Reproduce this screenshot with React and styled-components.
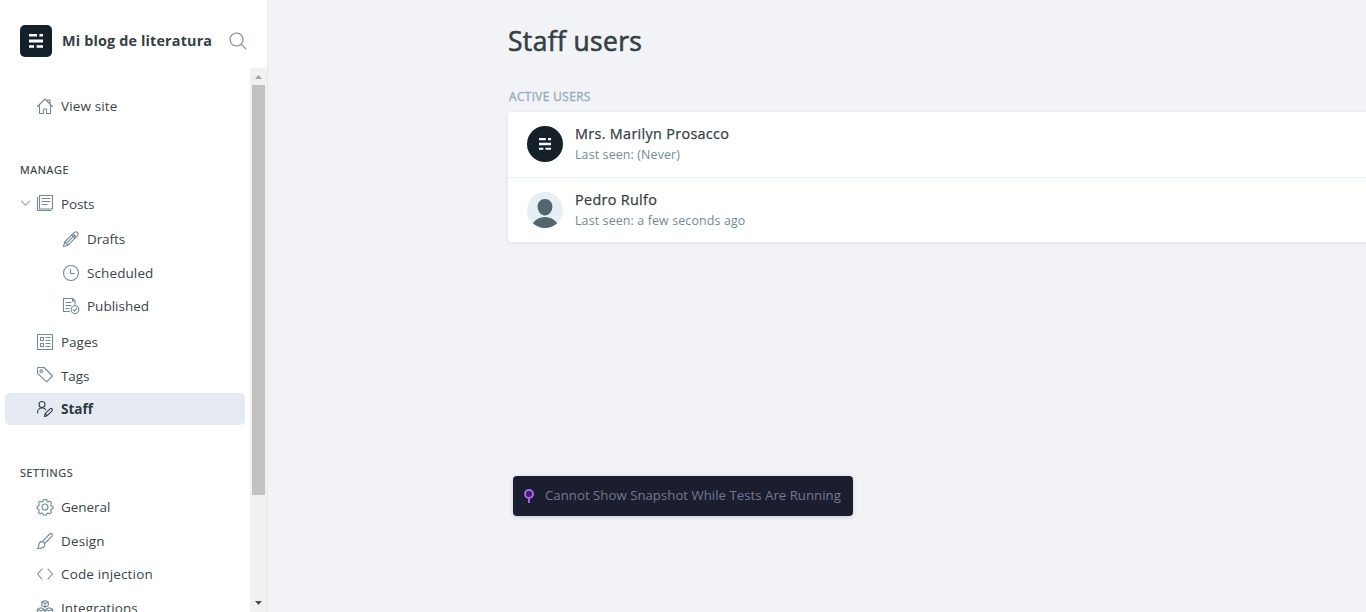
import React from 'react';
import styled, { createGlobalStyle } from 'styled-components';

const GlobalStyle = createGlobalStyle`
  * { box-sizing: border-box; }
  html, body { margin: 0; height: 100%; overflow: hidden; }
  body { font-family: "Open Sans", "Noto Sans", sans-serif; color: #343f44; background: #f2f3f7; }
  h1, h2, h3, p { margin: 0; }
`;

const Shell = styled.div`
  display: flex;
  width: 100%;
  height: 612px;
  overflow: hidden;
  position: relative;
`;

const Sidebar = styled.nav`
  flex: none;
  width: 268px;
  display: flex;
  flex-direction: column;
  background: #fff;
  border-right: 1px solid #e7e9ef;
`;

const SiteHeader = styled.header`
  flex: none;
  height: 68px;
  padding: 25px 20px 11px;
  display: flex;
  align-items: center;
`;

const SiteLogo = styled.span`
  width: 32px;
  height: 32px;
  border-radius: 5px;
  background: #15212a;
  display: flex;
  align-items: center;
  justify-content: center;
`;

const SiteTitle = styled.span`
  margin-left: 10px;
  width: 158px;
  font-size: 14.4px;
  font-weight: 700;
  line-height: 20px;
  letter-spacing: 0.15px;
  white-space: nowrap;
`;

const SearchIcon = styled.svg`
  flex: none;
  width: 18px;
  height: 18px;
  margin-left: 9px;
`;

const ScrollArea = styled.div`
  flex: 1;
  min-height: 0;
  display: flex;
`;

const NavContent = styled.div`
  width: 250px;
  padding: 22px 5px 0;
  overflow: hidden;
`;

const Scrollbar = styled.div`
  width: 17px;
  background: #f1f1f1;
  display: flex;
  flex-direction: column;
  align-items: center;
`;

const ScrollArrow = styled.svg`
  flex: none;
  width: 17px;
  height: 17px;
`;

const ScrollThumb = styled.div`
  width: 13px;
  height: 410px;
  margin-bottom: auto;
  background: #c1c1c1;
`;

const SectionTitle = styled.h3`
  height: 16px;
  margin: ${(p) => p.$top}px 0 0 15px;
  font-size: 10.8px;
  line-height: 16px;
  font-weight: 500;
  letter-spacing: ${(p) => p.$ls}px;
  text-transform: uppercase;
  -webkit-text-stroke: 0.2px currentColor;
`;

const NavRow = styled.div`
  height: 32px;
  margin-top: ${(p) => p.$top || 0}px;
  padding-left: ${(p) => (p.$arrow ? 15 : p.$sub ? 57 : 31)}px;
  display: flex;
  align-items: center;
  border-radius: 5px;
  background: ${(p) => (p.$active ? '#e6eaf2' : 'transparent')};
  font-weight: ${(p) => (p.$active ? 700 : 400)};
  color: ${(p) => (p.$active ? '#2d383d' : '#394449')};
`;

const NavIcon = styled.svg`
  flex: none;
  width: 18px;
  height: 18px;
  fill: none;
  stroke: ${(p) => (p.$active ? '#343f44' : '#738a94')};
  stroke-width: 1.1;
  stroke-linecap: round;
  stroke-linejoin: round;
`;

const NavArrow = styled.svg`
  flex: none;
  width: 12px;
  height: 8px;
  margin-right: 4px;
  fill: none;
  stroke: #a3b2b9;
  stroke-width: 1.2;
`;

const NavLabel = styled.span`
  margin-left: 7px;
  padding-top: ${(p) => (p.$low ? 2 : 0)}px;
  font-size: 13.5px;
  line-height: 20px;
  letter-spacing: ${(p) => p.$ls ?? 0}px;
  white-space: nowrap;
`;

const Main = styled.main`
  flex: 1;
  min-width: 0;
  padding: 21px 0 0 240px;
  overflow: hidden;
`;

const PageTitle = styled.h1`
  font-size: 26.4px;
  line-height: 40px;
  font-weight: 500;
  letter-spacing: 0.38px;
  -webkit-text-stroke: 0.6px currentColor;
`;

const GroupTitle = styled.h2`
  margin: 27px 0 7px 1px;
  font-size: 11.8px;
  line-height: 17px;
  font-weight: 500;
  letter-spacing: 0.42px;
  color: #9baeb8;
  text-transform: uppercase;
  -webkit-text-stroke: 0.4px currentColor;
`;

const UserList = styled.section`
  width: 880px;
  height: 130px;
  background: #fff;
  border-radius: 4px;
  box-shadow: 0 1px 4px rgba(50, 65, 90, 0.11);
`;

const UserRow = styled.article`
  display: flex;
  padding: 14px 19px 0;
  height: ${(p) => (p.$divided ? 66 : 64)}px;
  border-bottom: ${(p) => (p.$divided ? '1px solid #e5eff5' : '0')};
`;

const Avatar = styled.svg`
  flex: none;
  width: 36px;
  height: 36px;
`;

const UserInfo = styled.div`
  margin: -3px 0 0 12px;
  white-space: nowrap;
`;

const UserName = styled.h3`
  font-size: 14.4px;
  line-height: 21px;
  font-weight: 500;
  letter-spacing: 0.32px;
  -webkit-text-stroke: 0.25px currentColor;
`;

const LastSeen = styled.p`
  font-size: 12.4px;
  line-height: 21px;
  color: #738a94;
  letter-spacing: 0.14px;
`;

const Toast = styled.div`
  position: absolute;
  left: 513px;
  top: 476px;
  width: 340px;
  height: 40px;
  padding-left: 10px;
  display: flex;
  align-items: center;
  border-radius: 4px;
  background: #1b1e2e;
  box-shadow: 0 1px 4px rgba(27, 30, 46, 0.18);
  color: #747994;
  font-size: 13.2px;
  white-space: nowrap;
`;

const PinIcon = styled.svg`
  flex: none;
  width: 12px;
  height: 16px;
  margin-right: 10px;
`;

const ToastText = styled.span`
  letter-spacing: 0.03px;
  line-height: 20px;
  padding-bottom: 2px;
`;

const Bars = () => (
  <g fill="#fff">
    <path d="M0 0h8v2.6H0zM10.4 0h3.6v2.6h-3.6zM0 5.6h14v2.8H0zM0 11.2h5v2.6H0zM7.6 11.2H14v2.6H7.6z" />
  </g>
);

const icons = {
  house: <path d="M1.500 9.500 9 2l7.500 7.500M3.500 8.500v8h4v-4.500h3v4.500h4v-8M11.500 3h2.500v3.500" />,
  posts: <path d="M3.500 1.500h13v13.500h-13zM1.500 3.500v12.500q0 .5.5.5h13M6 4.500h8M6 7.500h8M6 10.500h5" />,
  pencil: <path d="M1.500 16.500l1.200-4.500L12.300 2.400q1.400-1.400 3 .1t.2 3.100L6 15.200zM2.700 12l3.300 3.200M11 3.700l3.300 3.300M12.500 5.300l-8 8M9.800 5l3.200 3.200" />,
  clock: <path d="M9 1.500a7.500 7.500 0 1 0 0 15 7.500 7.500 0 1 0 0-15M8.500 5v4.500h4" />,
  published: <path d="M7.500 14.500h-6v-13h9l2.500 2.500v3.500M4 5.500h5M4 8.500h5M4 11.500h3M10.500 1.500v2.500h2.500M13 8.700a3.900 3.900 0 1 0 0 7.800 3.900 3.900 0 1 0 0-7.800M11.200 12.700l1.300 1.300 2.400-2.700" />,
  pages: <path d="M1.500 1.500h15v15h-15zM4.500 4.500h3v3h-3zM4.500 10.500h3v3h-3zM10 4.500h4M10 7.500h4M10 10.500h4M10 13.500h4" />,
  tag: (
    <g>
      <path d="M1.500 1.500h6.500l8.500 8.500-5.800 5.800-9.200-8.500z" />
      <circle cx="5.200" cy="5.200" r="1.300" />
    </g>
  ),
  staff: (
    <g>
      <circle cx="6" cy="4.500" r="3" />
      <path d="M1.500 13q0-5 4.500-5 2.400 0 3.600 1.600M8.500 16.500l.7-2.900 4.800-4.800q1-1 2 0t.1 2l-4.900 4.900zM9.200 13.600l2 2.100" />
    </g>
  ),
  gear: (
    <g>
      <circle cx="9" cy="9" r="3" />
      <path d="M7.500 1.500h3l.5 2 1.200.6 1.900-.9 1.400 1.400-.8 2 .6 1.300 1.700.7v2l-1.700.7-.6 1.200.8 1.900-1.700 1.500-1.700-.9-1.200.5-.6 1.500H7.500l-.6-1.500-1.200-.5-1.800.9-1.500-1.500.8-1.900-.5-1.200-1.600-.7v-2l1.600-.7.6-1.300-.8-2 1.400-1.400 1.900.9 1.200-.6z" />
    </g>
  ),
  brush: <path d="M6.500 9.400 13.700 2q1.300-1.200 2.300-.2t0 2.300L8.700 11.500zM6.500 9.400l2.200 2.100q.5 2.500-1.200 3.800-2 1.500-6 1.200 1.300-1 1.300-2.700-.2-3.800 3.700-4.400z" />,
  code: <path d="M6 4 1.500 9 6 14M12 4l4.500 5L12 14" />,
  blocks: <path d="M9 1.500l3.300 1.400v3.700L9 8.300 5.700 6.600V2.900zM5.700 2.900 9 4.500l3.300-1.600M9 4.500v3.800M4.800 8.700l3.500 1.600v4l-3.500 1.900-3.400-1.900v-4zM1.400 10.300l3.400 1.700 3.500-1.700M13.200 8.700l3.400 1.600v4l-3.400 1.900-3.500-1.900v-4zM9.700 10.300l3.500 1.700 3.400-1.700" />,
};

const NavItem = ({ icon, label, ls, top, sub, active, arrow, low }) => (
  <NavRow $top={top} $sub={sub} $active={active} $arrow={arrow}>
    {arrow && (
      <NavArrow viewBox="0 0 12 8">
        <path d="M1 1.800 5.500 6.200 10 1.800" />
      </NavArrow>
    )}
    <NavIcon viewBox="0 0 18 18" $active={active}>{icons[icon]}</NavIcon>
    <NavLabel $ls={ls} $low={low}>{label}</NavLabel>
  </NavRow>
);

export default function App() {
  return (
    <>
      <GlobalStyle />
      <Shell>
        <Sidebar>
          <SiteHeader>
            <SiteLogo>
              <svg width="14" height="14" viewBox="0 0 14 14"><Bars /></svg>
            </SiteLogo>
            <SiteTitle>Mi blog de literatura</SiteTitle>
            <SearchIcon viewBox="0 0 18 18" fill="none" stroke="#738a94" strokeWidth="1.100" strokeLinecap="round">
              <circle cx="7.500" cy="7.500" r="6.500" />
              <path d="m12.200 12.200 4.500 4.500" />
            </SearchIcon>
          </SiteHeader>
          <ScrollArea>
            <NavContent>
              <NavItem icon="house" label="View site" ls={0.13} />
              <SectionTitle $top={40} $ls={0.65}>Manage</SectionTitle>
              <NavItem top={9} icon="posts" label="Posts" ls={-0.12} arrow low />
              <NavItem top={4} icon="pencil" label="Drafts" ls={-0.1} sub />
              <NavItem top={2} icon="clock" label="Scheduled" ls={0.1} sub />
              <NavItem top={1} icon="published" label="Published" sub />
              <NavItem top={4} icon="pages" label="Pages" />
              <NavItem top={1} icon="tag" label="Tags" ls={-0.1} low />
              <NavItem top={2} icon="staff" label="Staff" active />
              <SectionTitle $top={40} $ls={0.55}>Settings</SectionTitle>
              <NavItem top={10} icon="gear" label="General" ls={-0.05} />
              <NavItem top={2} icon="brush" label="Design" ls={0.15} />
              <NavItem top={1} icon="code" label="Code injection" ls={0.15} />
              <NavItem top={2} icon="blocks" label="Integrations" ls={0.08} />
            </NavContent>
            <Scrollbar>
              <ScrollArrow viewBox="0 0 17 17"><path d="M5 11h7L8.500 7z" fill="#a3a3a3" /></ScrollArrow>
              <ScrollThumb />
              <ScrollArrow viewBox="0 0 17 17"><path d="M5 6h7L8.500 10z" fill="#505050" /></ScrollArrow>
            </Scrollbar>
          </ScrollArea>
        </Sidebar>
        <Main>
          <PageTitle>Staff users</PageTitle>
          <GroupTitle>Active users</GroupTitle>
          <UserList>
            <UserRow $divided>
              <Avatar viewBox="0 0 36 36">
                <circle cx="18" cy="18" r="18" fill="#15212a" />
                <g transform="translate(12 12) scale(.86)"><Bars /></g>
              </Avatar>
              <UserInfo>
                <UserName>Mrs. Marilyn Prosacco</UserName>
                <LastSeen>Last seen: (Never)</LastSeen>
              </UserInfo>
            </UserRow>
            <UserRow>
              <Avatar viewBox="0 0 36 36">
                <circle cx="18" cy="18" r="18" fill="#e5eff5" />
                <path d="M18 7c4.500 0 7.400 3.200 7.400 7.500 0 5-3.600 9-7.400 9s-7.400-4-7.400-9C10.600 10.200 13.500 7 18 7zM5.800 31.200Q10.500 25 18 25t12.200 6.200Q25 36 18 36T5.800 31.200z" fill="#54666d" />
              </Avatar>
              <UserInfo>
                <UserName>Pedro Rulfo</UserName>
                <LastSeen>Last seen: a few seconds ago</LastSeen>
              </UserInfo>
            </UserRow>
          </UserList>
        </Main>
        <Toast>
          <PinIcon viewBox="0 0 12 16">
            <path d="M6 9.500V15" stroke="#a35ee0" strokeWidth="2" />
            <circle cx="6" cy="6" r="4" fill="#45196a" stroke="#a968e8" strokeWidth="2" />
          </PinIcon>
          <ToastText>Cannot Show Snapshot While Tests Are Running</ToastText>
        </Toast>
      </Shell>
    </>
  );
}
